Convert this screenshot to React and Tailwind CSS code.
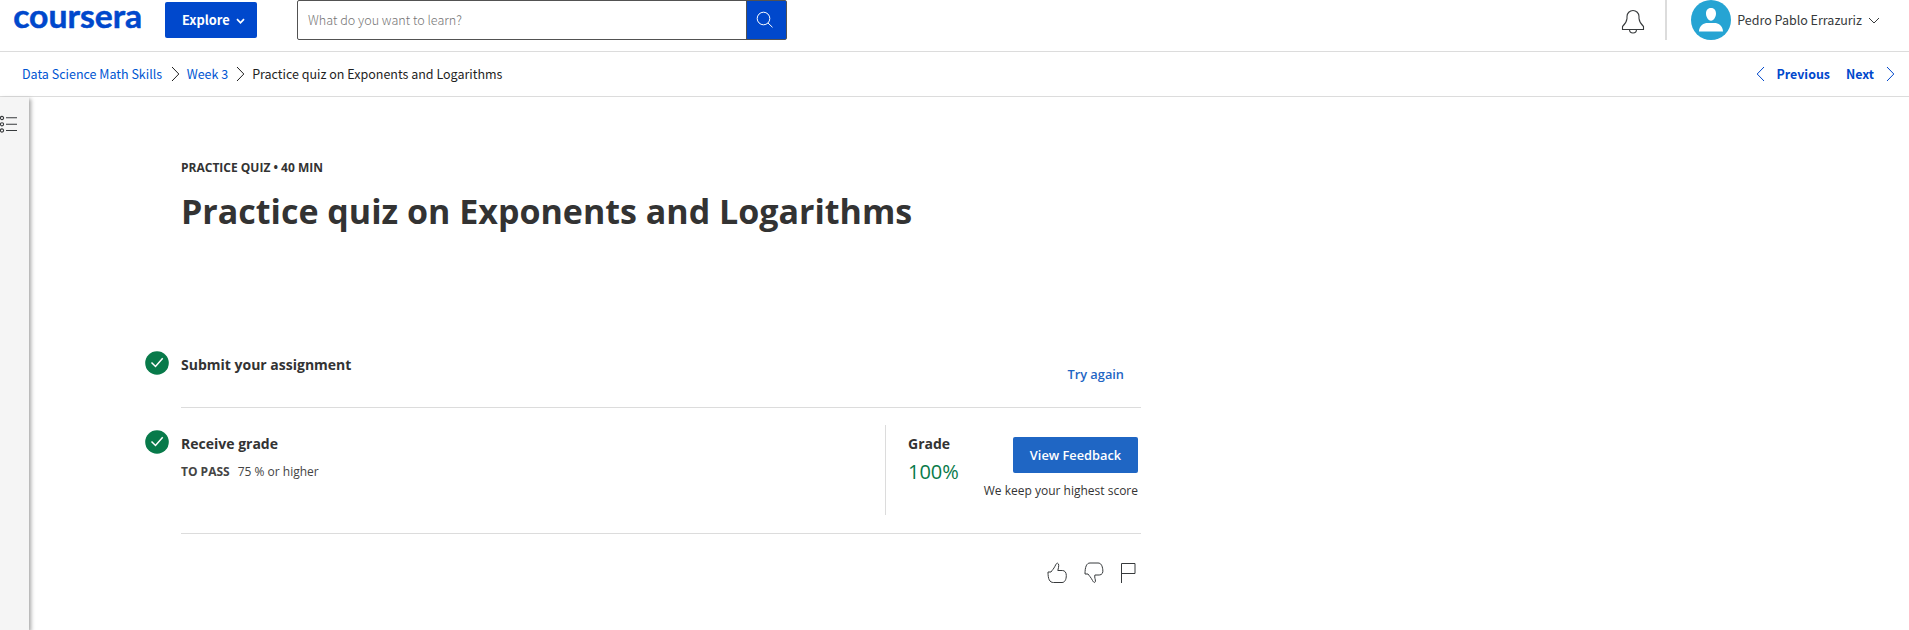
import React from "react";

const sans = "font-['Noto_Sans_CJK_SC','Noto_Sans',sans-serif]";

function Header() {
  return (
    <header className={`flex h-[52px] items-start border-b border-[#dcdcdc] text-[12.5px] ${sans}`}>
      <svg className="ml-[10px] h-[42px] w-[135px]" viewBox="0 0 135 42" role="img" aria-label="coursera">
        <text x="3.2" y="27.8" textLength="129" lengthAdjust="spacingAndGlyphs" fontSize="33" stroke="#0048cc" strokeWidth="0.5" className="fill-[#0048cc] font-['Lato',sans-serif] font-bold">coursera</text>
      </svg>
      <button className="mt-[2px] ml-[20px] flex h-9 w-[92px] items-center rounded-[2px] bg-[#0048cc] pl-[17px] text-[12.8px] font-bold text-white">
        Explore
        <svg className="mt-[2px] ml-[6px]" width="9" height="7" viewBox="0 0 9 7" fill="none" stroke="currentColor" strokeWidth="1.7">
          <path d="M1 1.2 4.5 4.8 8 1.2" />
        </svg>
      </button>
      <div className="ml-10 flex h-10 w-[490px] rounded-[2px] border border-[#525252]">
        <div className="flex flex-1 items-center pl-[10px] text-[12.6px] font-light text-[#757575]">What do you want to learn?</div>
        <div className="flex w-10 items-center border-l border-[#525252] bg-[#0048cc] pl-[9px]">
          <svg width="18" height="18" viewBox="0 0 18 18" fill="none" stroke="#fff" strokeWidth="1">
            <circle cx="7.5" cy="7.5" r="6.3" />
            <path d="m12 12 4.5 4.3" />
          </svg>
        </div>
      </div>
      <div className="ml-auto flex h-10 items-center text-[#373a3c]">
        <svg className="mt-1" width="24" height="26" viewBox="0 0 24 26" fill="none" stroke="#373a3c" strokeWidth="1.1">
          <path d="M1.5 20.5v-3C4.2 15 5.7 12.500 6 9.500V7.500a6 6 0 0 1 12 0v2c.3 3 1.800 5.500 4.500 8v3Z" />
          <path d="M8.500 20.500c0 4.600 7 4.600 7 0" />
        </svg>
        <div className="ml-[20px] h-10 w-[2px] bg-[#dcdcdc]" />
        <svg className="ml-[24px]" width="40" height="40" viewBox="0 0 40 40">
          <circle cx="20" cy="20" r="20" fill="#26a4d3" />
          <path fill="#fff" d="M20 8c3.600 0 5 2.500 5 5.500S23 20.700 20 20.700s-5-4.200-5-7.200S16.400 8 20 8ZM8 31.500c0-6 5-8.500 8.500-8.500h7c3.500 0 8.500 2.500 8.500 8.500Z" />
        </svg>
        <span className="ml-[6px] whitespace-nowrap">Pedro Pablo Errazuriz</span>
        <svg className="mt-[2px] mr-[29px] ml-[6px]" width="12" height="8" viewBox="0 0 12 8" fill="none" stroke="#373a3c">
          <path d="m1 1 5 5 5-5" />
        </svg>
      </div>
    </header>
  );
}

function Chevron({ className = "", left = false }) {
  return (
    <svg className={className} width="9" height="16" viewBox="0 0 9 16" fill="none" stroke="currentColor" strokeWidth="1">
      <path d={left ? "M8 1 1.200 8 8 15" : "M1 1l6.800 7L1 15"} />
    </svg>
  );
}

function Breadcrumbs() {
  return (
    <nav className={`flex h-[45px] items-center border-b border-[#dcdcdc] pl-[22px] text-[12.5px] whitespace-nowrap text-[#1f1f1f] ${sans}`}>
      <a className="text-[#0056d2]">Data Science Math Skills</a>
      <Chevron className="mr-[7px] ml-[8.500px]" />
      <a className="text-[#0056d2]">Week 3</a>
      <Chevron className="mr-[7px] ml-[8px]" />
      <span>Practice quiz on Exponents and Logarithms</span>
      <div className="mr-[14px] ml-auto flex items-center font-bold text-[#0048cc]">
        <Chevron left />
        <span className="ml-[12px] text-[12.4px]">Previous</span>
        <span className="ml-4 text-[12.4px]">Next</span>
        <Chevron className="ml-3" />
      </div>
    </nav>
  );
}

function Sidebar() {
  return (
    <aside className="w-[29px] shrink-0 bg-[#f5f5f5] pt-[18px] shadow-[2px_2px_4px_rgba(0,0,0,0.35)]">
      <svg width="18" height="18" viewBox="0 0 18 18" fill="none" stroke="#373a3c" strokeWidth="1.1">
        <circle cx="2" cy="3" r="1.600" />
        <circle cx="2" cy="9.300" r="1.600" />
        <circle cx="2" cy="15.500" r="1.600" />
        <path d="M6 2.800h11M6 9.300h11M6 15.500h11" />
      </svg>
    </aside>
  );
}

function Check() {
  return (
    <svg className="mr-3 h-6 w-6 shrink-0" viewBox="0 0 24 24">
      <circle cx="12" cy="12" r="11.800" fill="#087a4a" />
      <path d="m6.500 11.500 4 4 7.200-8.300" fill="none" stroke="#fff" strokeWidth="1.500" />
    </svg>
  );
}

function Reactions() {
  return (
    <div className="mt-[28px] flex h-[22px] justify-end gap-[16px] pr-[5px]">
      <svg className="mr-px" width="20" height="22" viewBox="0 0 20 22" fill="none" stroke="#373a3c">
        <path d="M1 10h3C5 8.300 6.800 6.800 8 4.200 9 2 9.700 1 10.600 1.200c1.600.5 1.300 3.300.2 7.300h4.500c2.600 0 4 2 4 5 0 4-1.500 7-4.300 7H6.500C2.500 20.500 1 17 1 10Z" />
      </svg>
      <svg width="20" height="22" viewBox="0 0 20 22" fill="none" stroke="#373a3c">
        <path d="M1 12h3c1 1.500 3 3.500 4.500 6.500 1 2 2.500 2.800 2.900.8.300-2-1.200-3.300-.5-6.300h4.300c3 0 4-2.500 3.600-5.200C18.300 3.500 17 1 14 1H6C2.500 1 1 5 1 12Z" />
      </svg>
      <svg width="16" height="22" viewBox="0 0 16 22" fill="none" stroke="#373a3c">
        <path d="M1.500 21V1.500h13.500v10H1.500" />
      </svg>
    </div>
  );
}

export default function App() {
  return (
    <div className="flex h-[630px] flex-col overflow-hidden bg-white font-['Open_Sans',sans-serif] text-[#333]">
      <Header />
      <Breadcrumbs />
      <div className="flex min-h-0 flex-1">
        <Sidebar />
        <main className="ml-[116px] w-[996px] pt-[59px]">
          <div className="ml-9">
            <p className="text-xs leading-6 font-bold">PRACTICE QUIZ • 40 MIN</p>
            <h1 className="mt-[7px] text-[34px] leading-[48px] font-bold whitespace-nowrap">Practice quiz on Exponents and Logarithms</h1>
          </div>
          <section className="mt-[116px] flex h-[57px]">
            <Check />
            <div className="flex flex-1 justify-between border-b border-[#dcdcdc]">
              <h2 className="mt-1 text-sm leading-5 font-bold">Submit your assignment</h2>
              <a className="mt-[13px] mr-[17px] text-[12.8px] leading-5 font-semibold text-[#1f66c4]">Try again</a>
            </div>
          </section>
          <section className="flex h-[126px] pt-[22px]">
            <Check />
            <div className="flex flex-1 border-b border-[#dcdcdc]">
              <div className="mt-1 w-[704px]">
                <h2 className="text-sm leading-5 font-bold">Receive grade</h2>
                <p className="mt-2 text-xs leading-5 text-[#444]"><b className="mr-2">TO PASS</b>75 % or higher</p>
              </div>
              <div className="-mt-[5px] flex h-[90px] flex-1 border-l border-[#dcdcdc] pl-[22px]">
                <div className="mt-[9px]">
                  <h2 className="text-sm leading-5 font-bold">Grade</h2>
                  <p className="mt-[6px] text-xl leading-6 text-[#087a4a]">100%</p>
                </div>
                <div className="mt-3 mr-[3px] ml-auto flex flex-col items-end">
                  <button className="h-9 w-[125px] rounded-[2px] bg-[#1f66c4] pt-px text-[12.8px] font-semibold text-white">View Feedback</button>
                  <p className="mt-2 text-xs leading-5">We keep your highest score</p>
                </div>
              </div>
            </div>
          </section>
          <Reactions />
        </main>
      </div>
    </div>
  );
}
